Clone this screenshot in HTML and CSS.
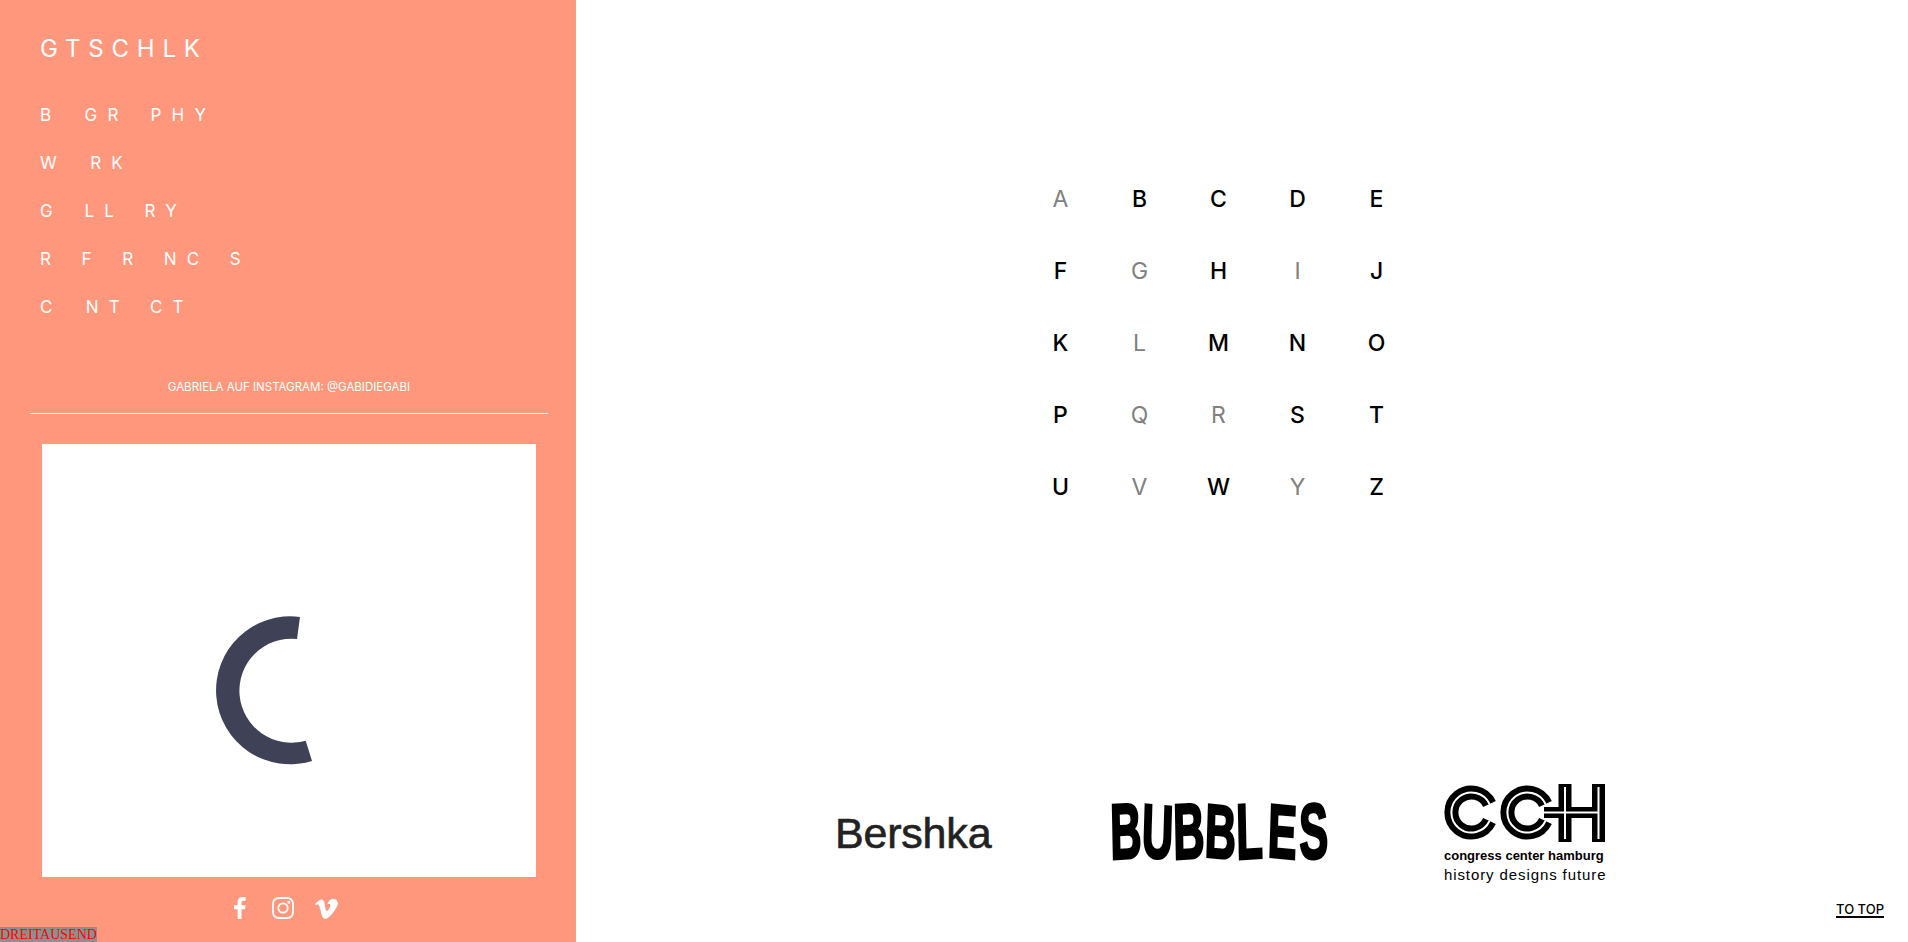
FILE: index.html
```html
<!DOCTYPE html>
<html lang="de">

<head>
    <meta charset="UTF-8">
    <title>GTSCHLK</title>
    <link rel="stylesheet" href="styles.css">
</head>

<body>
    <aside class="sidebar">
        <div class="brand">GTSCHLK</div>

        <nav class="menu">
            <a href="#">B<i>O</i>GR<i>A</i>PHY</a>
            <a href="#">W<i>O</i>RK</a>
            <a href="#">G<i>A</i>LL<i>E</i>RY</a>
            <a href="#">R<i>E</i>F<i>E</i>R<i>E</i>NC<i>E</i>S</a>
            <a href="#">C<i>O</i>NT<i>A</i>CT</a>
        </nav>

        <div class="insta-title">GABRIELA AUF INSTAGRAM: @GABIDIEGABI</div>

        <div class="insta-box">
            <svg class="spinner" viewBox="0 0 494 433">
                <path d="M258 173 A74 74 0 1 0 270 317 L263.700 296.700 A52 52 0 1 1 255 195 Z" fill="#3f4257" />
            </svg>
        </div>

        <div class="social">
            <svg class="icon" viewBox="0 0 24 24">
                <path d="M14.500 23V13.200H18L18.600 9.200H14.500V6.800C14.500 5.600 15 4.800 16.600 4.800H18.700V1.200C18.200 1.100 17 1 15.700 1 12.700 1 10.600 2.800 10.600 6.200V9.200H7V13.200H10.600V23Z" fill="#fff" />
            </svg>
            <svg class="icon" viewBox="0 0 24 24" fill="none" stroke="#fff" stroke-width="1.800">
                <rect x="2" y="2" width="20" height="20" rx="5.500" />
                <circle cx="12" cy="12" r="4.700" />
                <circle cx="17.800" cy="6.200" r="0.600" />
            </svg>
            <svg class="icon" viewBox="0 0 24 24">
                <path d="M23 7C22.900 9.300 21.300 12.400 18.200 16.400 15 20.600 12.300 22.700 10.100 22.700 8.700 22.700 7.600 21.400 6.700 18.900 6.100 16.600 5.500 14.300 4.900 12 4.200 9.500 3.500 8.300 2.700 8.300 2.500 8.300 1.900 8.700 1 9.300L0 8.100C1.100 7.100 2.100 6.200 3.100 5.300 4.500 4.100 5.600 3.400 6.300 3.400 8 3.200 9 4.400 9.400 6.800 9.800 9.400 10.100 11 10.300 11.700 10.800 13.900 11.300 15 11.900 15 12.300 15 13 14.300 13.900 12.900 14.800 11.500 15.300 10.400 15.300 9.700 15.400 8.500 15 7.900 13.900 7.900 13.400 7.900 12.900 8 12.300 8.200 13.400 4.600 15.600 2.800 18.800 2.900 21.200 3 22.300 4.400 23 7Z" fill="#fff" />
            </svg>
        </div>

        <div class="debug-tag">DREITAUSEND</div>
    </aside>

    <main class="content">
        <div class="alphabet">
            <a class="off">A</a><a>B</a><a>C</a><a>D</a><a>E</a>
            <a>F</a><a class="off">G</a><a>H</a><a class="off">I</a><a>J</a>
            <a>K</a><a class="off">L</a><a>M</a><a>N</a><a>O</a>
            <a>P</a><a class="off">Q</a><a class="off">R</a><a>S</a><a>T</a>
            <a>U</a><a class="off">V</a><a>W</a><a class="off">Y</a><a>Z</a>
        </div>

        <div class="logos">
            <div class="logo-bershka">Bershka</div>
            <div class="logo-bubbles"><span>B</span><span>U</span><span>B</span><span>B</span><span>L</span><span>E</span><span>S</span></div>
            <div class="logo-cch">
                <svg class="cch-mark" viewBox="0 0 161 58">
                    <g fill="none" stroke="#000" stroke-width="14">
                        <path d="M45.500 20 A20 20 0 1 0 45.500 37" />
                        <path d="M101.500 20 A20 20 0 1 0 101.500 37" />
                    </g>
                    <path d="M100 28.500 H161" stroke="#000" stroke-width="11" />
                    <path d="M121 0 V58 M154.500 0 V58" stroke="#000" stroke-width="13" />
                    <g fill="none" stroke="#fff" stroke-width="2">
                        <path d="M45.500 20 A20 20 0 1 0 45.500 37" />
                        <path d="M101.500 20 A20 20 0 1 0 101.500 37" />
                        <path d="M100 28.500 H154.500 M121 3 V55 M154.500 3 V55" />
                    </g>
                </svg>
                <div class="cch-name">congress center hamburg</div>
                <div class="cch-claim">history designs future</div>
            </div>
        </div>

        <a class="to-top" href="#">TO TOP</a>
    </main>
</body>

</html>
```

FILE: styles.css
```css
html,
body {
    margin: 0;
    height: 942px;
    overflow: hidden;
}

body {
    display: flex;
    font-family: Inter, "Open Sans", sans-serif;
    background-color: white;
}

a {
    color: inherit;
    text-decoration: none;
}

.sidebar {
    position: relative;
    width: 576px;
    height: 942px;
    box-sizing: border-box;
    padding-top: 36px;
    background-color: #ff977d;
    color: white;
    flex-shrink: 0;
}

.brand {
    margin-left: 40px;
    font-size: 24px;
    line-height: 26px;
    letter-spacing: 7.800px;
}

.menu {
    display: flex;
    flex-direction: column;
    gap: 28px;
    margin: 43px 0 0 40px;
}

.menu a {
    font-size: 17px;
    line-height: 20px;
    letter-spacing: 10.200px;
}

.menu i {
    visibility: hidden;
    font-style: normal;
}

.insta-title {
    margin: 62px 28px 0 30px;
    padding-bottom: 18px;
    border-bottom: 1px solid white;
    font-size: 11.500px;
    line-height: 16px;
    text-align: center;
}

.insta-box {
    width: 494px;
    height: 433px;
    margin: 30px 0 0 42px;
    background-color: white;
}

.spinner {
    display: block;
    width: 100%;
    height: 100%;
}

.social {
    display: flex;
    justify-content: center;
    gap: 20px;
    margin-top: 19px;
    padding-right: 11px;
}

.icon {
    width: 24px;
    height: 24px;
}

.debug-tag {
    position: absolute;
    left: 0;
    bottom: 0;
    height: 15px;
    font-family: "Liberation Serif", serif;
    font-size: 14px;
    line-height: 16px;
    color: #f00;
    background-color: #8f8f8f;
}

.content {
    position: relative;
    flex: 1;
    display: flex;
    flex-direction: column;
}

.alphabet {
    display: grid;
    grid-template-columns: repeat(5, 79px);
    grid-auto-rows: 72px;
    align-items: center;
    justify-items: center;
    margin: 163px 0 0 445px;
    font-size: 23px;
    font-weight: 500;
    color: black;
}

.alphabet .off {
    color: #808080;
    font-weight: 400;
}

.logos {
    display: flex;
    align-items: flex-start;
    padding-left: 259px;
    margin-top: 261px;
}

.logo-bershka {
    width: 275px;
    margin-top: 24px;
    font-family: "Liberation Sans", sans-serif;
    font-size: 43px;
    line-height: 50px;
    letter-spacing: -0.200px;
    color: #222;
    -webkit-text-stroke: 0.600px #222;
}

.logo-bubbles {
    display: flex;
    width: 334px;
    height: 64px;
    margin-top: 15px;
    margin-left: -3px;
    font-family: "Liberation Sans", sans-serif;
    font-size: 54px;
    font-weight: bold;
    line-height: 64px;
    color: black;
    -webkit-text-stroke: 2px black;
}

.logo-bubbles span {
    width: 31.500px;
    text-align: center;
    transform: scaleX(0.8) scaleY(1.45) rotate(-2deg);
}

.logo-bubbles span:nth-child(even) {
    transform: scaleX(0.8) scaleY(1.4) rotate(3deg);
}

.logo-cch {
    width: 161px;
    margin-left: 3px;
}

.cch-mark {
    display: block;
    width: 161px;
    height: 58px;
}

.cch-name {
    margin-top: 7px;
    font-family: "Liberation Sans", sans-serif;
    font-size: 13px;
    font-weight: bold;
    line-height: 14px;
    white-space: nowrap;
}

.cch-claim {
    margin-top: 4px;
    font-family: "Liberation Sans", sans-serif;
    font-size: 15px;
    line-height: 16px;
    letter-spacing: 0.900px;
    white-space: nowrap;
}

.to-top {
    position: absolute;
    right: 24px;
    bottom: 24px;
    border-bottom: 2px solid black;
    font-size: 13px;
    font-weight: 500;
    line-height: 14px;
    color: black;
}
```
